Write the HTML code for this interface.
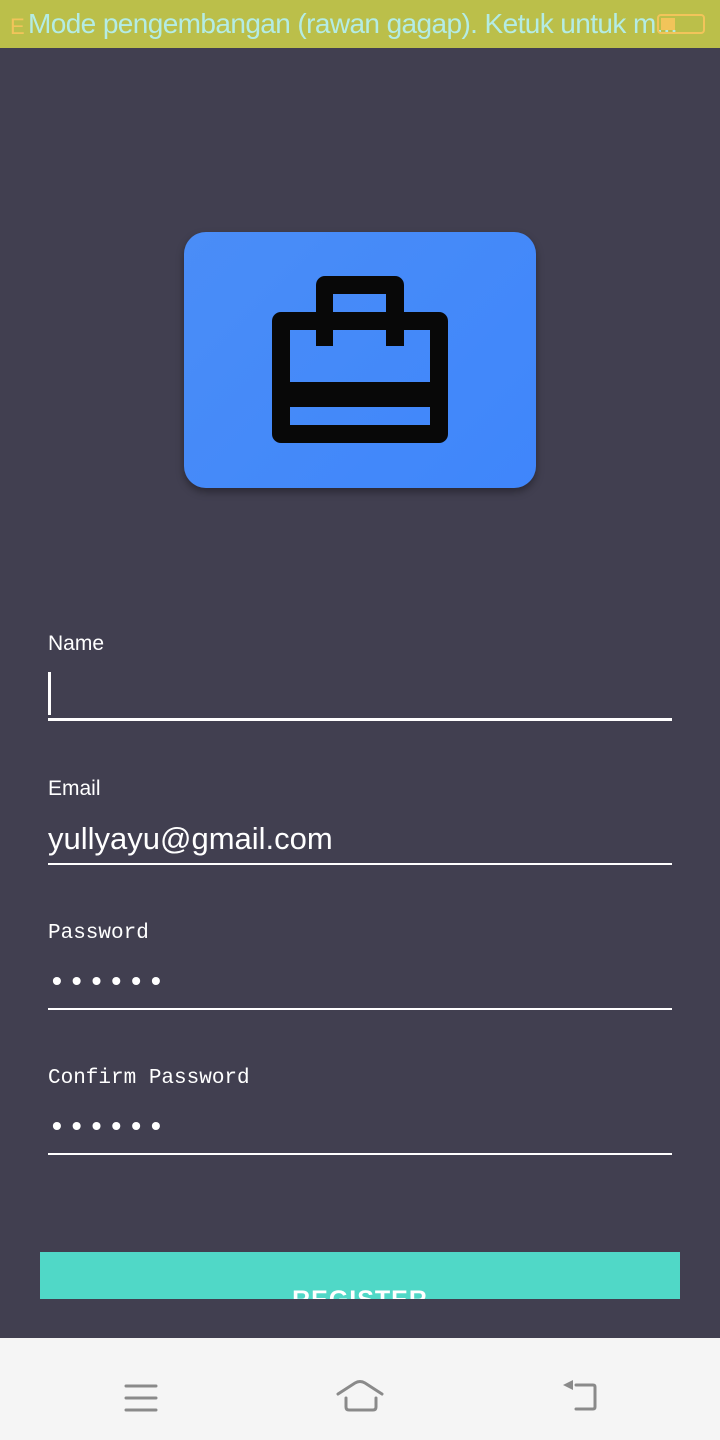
<!DOCTYPE html>
<html><head><meta charset="utf-8"><style>
*{margin:0;padding:0;box-sizing:border-box}
html,body{width:720px;height:1440px;overflow:hidden}
body{background:#413f50;position:relative;font-family:"Liberation Sans",sans-serif;color:#fff}
.sb{position:absolute;left:0;top:0;width:720px;height:48px;background:#bbbf4a}
.sb .t{position:absolute;left:28px;top:8px;font-size:28px;color:#b4ece4;white-space:nowrap;letter-spacing:-0.6px}
.sb .e{position:absolute;left:10px;top:14px;font-size:22px;color:#f2c45a}
.card{position:absolute;left:184px;top:232px;width:352px;height:256px;border-radius:22px;background:linear-gradient(135deg,#4a8df7,#3f86fb);box-shadow:0 4px 8px rgba(0,0,0,.35)}
.lbl{position:absolute;left:48px;font-size:21px}
.mono{font-family:"Liberation Mono",monospace;font-size:21px}
.line{position:absolute;left:48px;width:624px;height:2px;background:#fff}
.val{position:absolute;left:48px;font-size:31px}
.dots{position:absolute;left:52px;font-size:28px;letter-spacing:10px;font-weight:bold}
.btn{position:absolute;left:40px;top:1252px;width:640px;height:47px;background:#50d8c7;overflow:hidden;text-align:center}
.btn span{position:absolute;left:0;right:0;top:34px;font-size:25px;font-weight:bold;letter-spacing:1px}
.nav{position:absolute;left:0;top:1338px;width:720px;height:102px;background:#f5f5f5}
</style></head><body>
<div class="sb"><span class="e">E</span><span class="t">Mode pengembangan (rawan gagap). Ketuk untuk m...</span>
<div style="position:absolute;left:657px;top:14px;width:48px;height:20px;border:2px solid #f2c45a;border-radius:4px"><div style="width:14px;height:12px;margin:2px;background:#f2c45a"></div></div></div>
<div class="card"></div>
<svg style="position:absolute;left:0;top:0" width="720" height="500">
<path fill="#080808" fill-rule="evenodd" d="M325 276h70a9 9 0 0 1 9 9v27h35a9 9 0 0 1 9 9v113a9 9 0 0 1-9 9H281a9 9 0 0 1-9-9V321a9 9 0 0 1 9-9h35v-27a9 9 0 0 1 9-9zM333 294v18h53v-18zM290 330v52h140v-52h-26v16h-18v-16h-53v16h-17v-16zM290 407v18h140v-18z"/>
</svg>
<div class="lbl" style="top:632px">Name</div>
<div style="position:absolute;left:48px;top:672px;width:3px;height:43px;background:#fff"></div>
<div class="line" style="top:718px;height:3px"></div>
<div class="lbl" style="top:777px">Email</div>
<div class="val" style="top:821px">yullyayu@gmail.com</div>
<div class="line" style="top:863px"></div>
<div class="lbl mono" style="top:922px">Password</div>
<div class="dots" style="top:965px">••••••</div>
<div class="line" style="top:1008px"></div>
<div class="lbl mono" style="top:1067px">Confirm Password</div>
<div class="dots" style="top:1110px">••••••</div>
<div class="line" style="top:1153px"></div>
<div class="btn"><span>REGISTER</span></div>
<div class="nav">
<svg width="720" height="102">
<g stroke="#8a8a8a" stroke-width="3" stroke-linecap="round" fill="none">
<path d="M126 48h30M126 60h30M126 72h30"/>
<path d="M338 56l17-11q5-3 10 0l17 11M346 60v9q0 3 3 3h24q3 0 3-3v-9"/>
<path d="M576 47h17q2 0 2 2v20q0 2-2 2h-17"/>
</g>
<path d="M563 47l10-5v10z" fill="#8a8a8a"/>
</svg></div>
</body></html>
